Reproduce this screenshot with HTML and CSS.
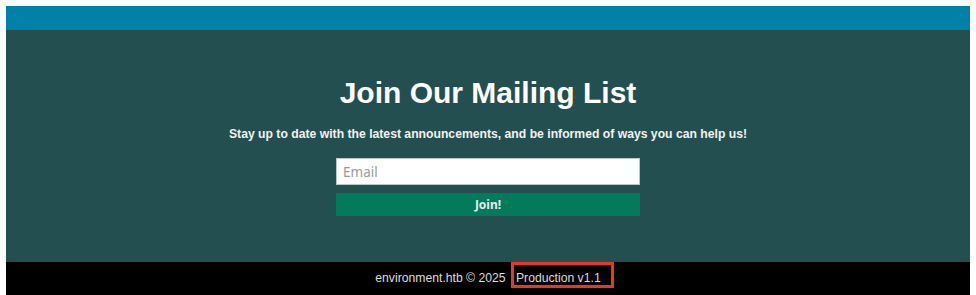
FILE: index.html
```html
<!DOCTYPE html>
<html lang="en">
<head>
    <meta charset="UTF-8">
    <meta name="viewport" content="width=device-width, initial-scale=1.0">
    <title>Environment</title>
    <link rel="stylesheet" href="styles.css">
</head>
<body>
<div class="page">
    <div class="topbar"></div>
    <section class="mailing">
        <h1>Join Our Mailing List</h1>
        <p class="lead">Stay up to date with the latest announcements, and be informed of ways you can help us!</p>
        <form class="mail-form" action="/mailing" method="POST">
            <input type="email" name="email" placeholder="Email" required>
            <button type="submit" class="btn">Join!</button>
        </form>
    </section>
    <footer class="footer">
        environment.htb &copy; 2025 <span class="version">Production v1.1</span>
    </footer>
</div>
</body>
</html>
```

FILE: styles.css
```css
body {
    margin: 0;
    padding: 6px 6px 0 6px;
    background-color: #fff;
    font-family: "Liberation Sans", Arial, sans-serif;
}

.topbar {
    height: 24px;
    background-color: #0181a7;
}

.mailing {
    background-color: #234f50;
    padding: 46px 0;
    display: flex;
    flex-direction: column;
    align-items: center;
    color: #fff;
}

.mailing h1 {
    margin: 0;
    font-size: 30px;
    line-height: 34px;
    font-weight: bold;
}

.lead {
    margin: 17px 0 16px 0;
    font-size: 12.2px;
    line-height: 15px;
    font-weight: bold;
    color: #f2f2f2;
}

.mail-form {
    width: 304px;
    display: flex;
    flex-direction: column;
    gap: 8px;
}

.mail-form input {
    height: 27px;
    box-sizing: border-box;
    margin: 0;
    padding: 0 6px;
    border: 1px solid #b9c8c8;
    font-family: "Noto Sans", sans-serif;
    font-size: 13.5px;
    color: #333;
    background-color: #fff;
}

.mail-form input::placeholder {
    color: #9a9a9a;
}

.btn {
    height: 23px;
    margin: 0;
    border: none;
    background-color: #027b5d;
    color: #e8ecea;
    font-family: "Noto Sans", sans-serif;
    font-size: 12px;
    font-weight: bold;
    cursor: pointer;
}

.footer {
    background-color: #000;
    color: #dcdcdc;
    font-size: 12.2px;
    text-align: center;
    padding: 9px 0 10px 0;
    line-height: 15px;
}

/* red highlight box drawn over the version label */
.version {
    position: relative;
    margin-left: 7px;
}

.version::after {
    content: "";
    position: absolute;
    top: -9px;
    bottom: -3px;
    left: -5px;
    right: -13px;
    border: 3px solid #e8362a;
}
```
